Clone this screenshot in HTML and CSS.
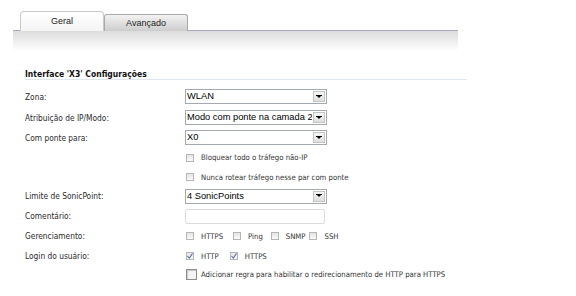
FILE: index.html
```html
<!DOCTYPE html>
<html>
<head>
<meta charset="utf-8">
<link rel="stylesheet" href="styles.css">
</head>
<body>
<div class="tabs">
  <div class="tab active">Geral</div>
  <div class="tab">Avançado</div>
</div>
<div class="tabbar"></div>
<div class="section">
  <div class="title">Interface 'X3' Configurações</div>
  <div class="form">
    <div class="lbl">Zona:</div>
    <div class="ctl"><div class="select"><span class="val">WLAN</span><span class="btn"><svg width="6" height="4" viewBox="0 0 6 4"><path d="M0 0h6v1h-1l-2 2-2-2h-1z" fill="#000"/></svg></span></div></div>

    <div class="lbl">Atribuição de IP/Modo:</div>
    <div class="ctl"><div class="select"><span class="val">Modo com ponte na camada 2</span><span class="btn"><svg width="6" height="4" viewBox="0 0 6 4"><path d="M0 0h6v1h-1l-2 2-2-2h-1z" fill="#000"/></svg></span></div></div>

    <div class="lbl">Com ponte para:</div>
    <div class="ctl"><div class="select"><span class="val">X0</span><span class="btn"><svg width="6" height="4" viewBox="0 0 6 4"><path d="M0 0h6v1h-1l-2 2-2-2h-1z" fill="#000"/></svg></span></div></div>

    <div class="lbl"></div>
    <div class="ctl"><span class="opt"><span class="cb"></span><span class="txt">Bloquear todo o tráfego não-IP</span></span></div>

    <div class="lbl"></div>
    <div class="ctl"><span class="opt"><span class="cb"></span><span class="txt">Nunca rotear tráfego nesse par com ponte</span></span></div>

    <div class="lbl">Limite de SonicPoint:</div>
    <div class="ctl"><div class="select"><span class="val">4 SonicPoints</span><span class="btn"><svg width="6" height="4" viewBox="0 0 6 4"><path d="M0 0h6v1h-1l-2 2-2-2h-1z" fill="#000"/></svg></span></div></div>

    <div class="lbl">Comentário:</div>
    <div class="ctl"><div class="input"></div></div>

    <div class="lbl">Gerenciamento:</div>
    <div class="ctl">
      <span class="opt gap10"><span class="cb"></span><span class="txt">HTTPS</span></span>
      <span class="opt gap8"><span class="cb"></span><span class="txt">Ping</span></span>
      <span class="opt gap4"><span class="cb"></span><span class="txt">SNMP</span></span>
      <span class="opt"><span class="cb"></span><span class="txt">SSH</span></span>
    </div>

    <div class="lbl">Login do usuário:</div>
    <div class="ctl">
      <span class="opt gap11"><span class="cb checked"><svg width="6" height="6" viewBox="0 0 6 6"><path d="M0.5 3l1.8 2 3.2-4.5" fill="none" stroke="#56739e" stroke-width="1.1"/></svg></span><span class="txt">HTTP</span></span>
      <span class="opt"><span class="cb checked"><svg width="6" height="6" viewBox="0 0 6 6"><path d="M0.5 3l1.8 2 3.2-4.5" fill="none" stroke="#56739e" stroke-width="1.1"/></svg></span><span class="txt">HTTPS</span></span>
    </div>

    <div class="lbl"></div>
    <div class="ctl"><span class="opt"><span class="cb big"></span><span class="txt big-txt">Adicionar regra para habilitar o redirecionamento de HTTP para HTTPS</span></span></div>
  </div>
</div>
</body>
</html>
```

FILE: styles.css
```css
body {
  margin: 0;
  background: #fff;
  font-family: "DejaVu Sans Condensed", "DejaVu Sans", sans-serif;
  color: #333;
}

.tabs {
  display: flex;
  align-items: flex-end;
  padding: 11px 0 0 20px;
  height: 19px;
  position: relative;
  z-index: 1;
}

.tab {
  width: 84px;
  box-sizing: border-box;
  display: flex;
  align-items: center;
  justify-content: center;
  font-family: "Liberation Sans", Arial, sans-serif;
  font-size: 9px;
  color: #222;
}

.tab.active {
  height: 20px;
  margin-bottom: -1px;
  border: 1px solid #c9c9c9;
  border-bottom: none;
  border-radius: 4px 4px 0 0;
  background: linear-gradient(#ffffff, #f4f4f4);
  padding-bottom: 1px;
}

.tab:not(.active) {
  height: 17px;
  margin-bottom: -1px;
  border: 1px solid #a9a9a9;
  border-bottom: none;
  border-radius: 3px 3px 0 0;
  background: linear-gradient(#f2f2f2, #cdcdcd);
  padding-bottom: 1px;
}

.tabbar {
  margin-left: 13px;
  width: 445px;
  height: 20px;
  border-top: 1px solid #aaaac4;
  background: linear-gradient(#dcdcdc, #ffffff);
}

.section {
  padding-left: 25px;
  margin-top: 18px;
}

.title {
  width: 442px;
  height: 10px;
  line-height: 10px;
  font-size: 8.5px;
  font-weight: bold;
  color: #111;
  border-bottom: 1px solid #dfe8ef;
}

.form {
  margin-top: 6px;
  display: grid;
  grid-template-columns: 160px 300px;
  grid-template-rows: 21px 21px 19px 21px 18px 20px 20px 20px 20px 17px;
}

.lbl {
  align-self: center;
  font-size: 8.3px;
  color: #2a2a2a;
}

.ctl {
  display: flex;
  align-items: center;
}

.select {
  width: 142px;
  height: 15px;
  box-sizing: border-box;
  border: 1px solid #a3a9b1;
  display: flex;
  background: #fff;
}

.val {
  flex: 1;
  overflow: hidden;
  white-space: nowrap;
  font-family: "Liberation Sans", Arial, sans-serif;
  font-size: 9.3px;
  line-height: 13px;
  color: #000;
  padding-left: 1px;
}

.btn {
  width: 12px;
  margin: 1px;
  box-sizing: border-box;
  border: 1px solid #c4c4c4;
  background: linear-gradient(#f6f6f6, #dedede);
  display: flex;
  align-items: center;
  justify-content: center;
}

.input {
  width: 140px;
  height: 15px;
  box-sizing: border-box;
  border: 1px solid #dcdcdc;
  border-radius: 2px;
}

.opt {
  display: inline-flex;
  align-items: center;
  margin-left: 1px;
}

.gap4 { margin-right: 3px; }
.gap8 { margin-right: 7px; }
.gap10 { margin-right: 9px; }
.gap11 { margin-right: 10px; }

.cb {
  width: 8px;
  height: 8px;
  box-sizing: border-box;
  border: 1px solid #b6b6b6;
  background: linear-gradient(#e4e4e4, #fafafa);
  display: flex;
  align-items: center;
  justify-content: center;
}

.cb.big {
  width: 11px;
  height: 11px;
  border: 1px solid #8c8c8c;
  box-shadow: inset 1px 1px 1px #c8c8c8;
  background: #f4f4f4;
}

.txt {
  margin-left: 7px;
  font-size: 7.7px;
  color: #333;
}

.txt.big-txt {
  margin-left: 4px;
}
```
